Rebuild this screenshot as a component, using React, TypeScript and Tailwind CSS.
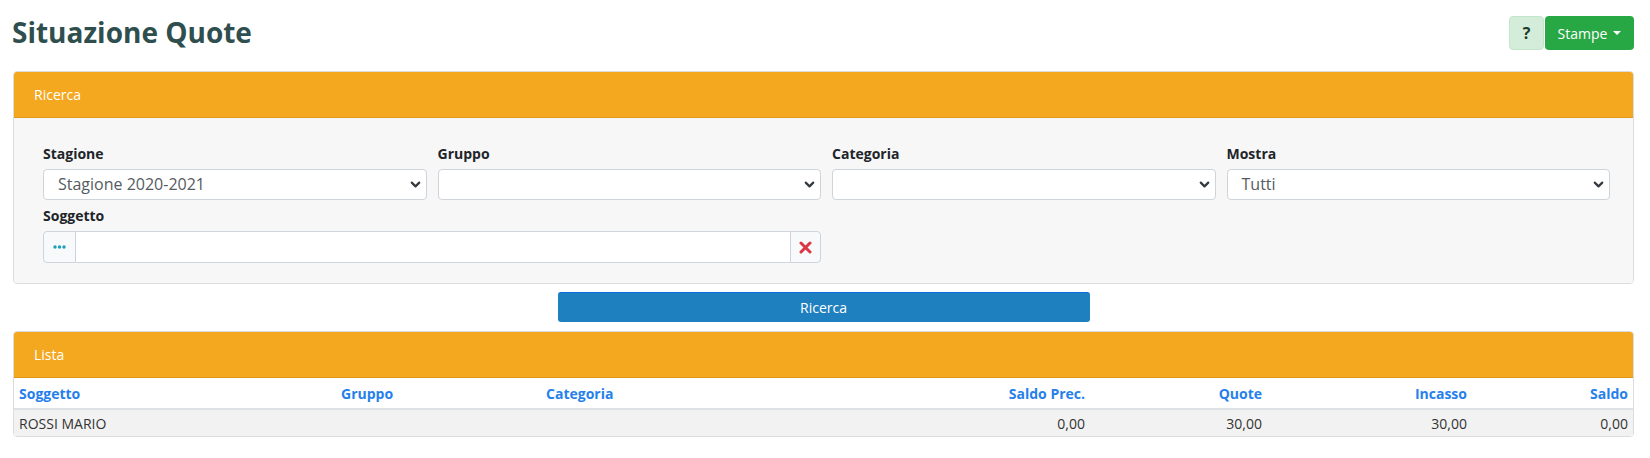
import { ChevronDown } from "lucide-react";

const font = { fontFamily: '"Open Sans", "Noto Sans", sans-serif' };

function Select({ value }: { value?: string }) {
  return (
    <div className="relative">
      <div className="h-[31px] rounded-[4px] border border-[#ced4da] bg-white pl-[14px] text-[16px] leading-[29px] text-[#555b61]">
        {value ?? "\u00a0"}
      </div>
      <ChevronDown
        className="pointer-events-none absolute right-[4px] top-[8px] h-[15px] w-[15px] text-[#343a40]"
        strokeWidth={3.5}
      />
    </div>
  );
}

function Campo({ label, value }: { label: string; value?: string }) {
  return (
    <div className="flex flex-col gap-[5px]">
      <label className="text-[14px] font-bold leading-[21px] text-[#212529]">{label}</label>
      <Select value={value} />
    </div>
  );
}

function Pannello({ titolo, children }: { titolo: string; children: React.ReactNode }) {
  return (
    <div className="overflow-hidden rounded-[4px] border border-[#dcdcdc]">
      <div className="flex h-[46px] items-center border-b border-[#e19a17] bg-[#f4a820] pl-[20px] text-[14px] text-white">
        {titolo}
      </div>
      {children}
    </div>
  );
}

const colonne = "grid grid-cols-[322px_205px_205px_344px_177px_205px_1fr]";

export default function App() {
  return (
    <div className="min-h-[458px] bg-white px-[13px] pr-[16px] text-[#212529]" style={font}>
      {/* intestazione */}
      <div className="flex items-start justify-between pt-[16px]">
        <h1 className="-ml-[1px] mt-[-1px] text-[28px] font-bold leading-[34px] text-[#2f4f4f]">
          Situazione Quote
        </h1>
        <div className="flex gap-[1px]">
          <button className="h-[34px] w-[35px] rounded-[4px] border border-[#c3e6cb] bg-[#d4edda] text-[16px] font-bold text-[#1d3a2a]">
            ?
          </button>
          <button className="flex h-[34px] w-[89px] items-center justify-center rounded-[4px] bg-[#28a745] text-[14px] text-white">
            Stampe
            <span className="ml-[6px] inline-block border-x-[4px] border-t-[4px] border-x-transparent border-t-white" />
          </button>
        </div>
      </div>

      {/* ricerca */}
      <div className="mt-[21px]">
        <Pannello titolo="Ricerca">
          <div className="bg-[#f7f7f7] pb-[20px] pl-[29px] pr-[23px] pt-[25px]">
            <div className="grid grid-cols-4 gap-x-[11px] gap-y-[5px]">
              <Campo label="Stagione" value="Stagione 2020-2021" />
              <Campo label="Gruppo" />
              <Campo label="Categoria" />
              <Campo label="Mostra" value="Tutti" />
              <div className="col-span-2 flex flex-col gap-[5px]">
                <label className="text-[14px] font-bold leading-[21px] text-[#212529]">Soggetto</label>
                <div className="flex h-[32px]">
                  <button className="flex w-[33px] items-center justify-center rounded-l-[4px] border border-[#ced4da] bg-[#f8f9fa]">
                    <svg width="13" height="4" viewBox="0 0 13 4">
                      <circle cx="2" cy="2" r="1.7" fill="#17a2b8" />
                      <circle cx="6.5" cy="2" r="1.7" fill="#17a2b8" />
                      <circle cx="11" cy="2" r="1.7" fill="#17a2b8" />
                    </svg>
                  </button>
                  <input className="min-w-0 flex-1 border-y border-[#ced4da] bg-white outline-none" />
                  <button className="flex w-[31px] items-center justify-center rounded-r-[4px] border border-[#ced4da] bg-[#f8f9fa]">
                    <svg width="13" height="13" viewBox="0 0 13 13">
                      <path d="M2 2 L11 11 M11 2 L2 11" stroke="#dc3545" strokeWidth="3" strokeLinecap="round" />
                    </svg>
                  </button>
                </div>
              </div>
            </div>
          </div>
        </Pannello>
      </div>

      <div className="mt-[8px] flex justify-center">
        <button className="h-[30px] w-[532px] rounded-[3px] border-t border-[#0a6fd8] bg-[#1f80bf] text-[14px] text-white">
          Ricerca
        </button>
      </div>

      {/* lista */}
      <div className="mt-[9px]">
        <Pannello titolo="Lista">
          <div className="bg-white text-[14px]">
            <div className={`${colonne} h-[32px] items-center border-b-2 border-[#dee2e6] font-bold text-[#2680eb]`}>
              <div className="px-[5px]">Soggetto</div>
              <div className="px-[5px]">Gruppo</div>
              <div className="px-[5px]">Categoria</div>
              <div className="px-[5px] text-right">Saldo Prec.</div>
              <div className="px-[5px] text-right">Quote</div>
              <div className="px-[5px] text-right">Incasso</div>
              <div className="px-[5px] text-right">Saldo</div>
            </div>
            <div className={`${colonne} h-[26px] items-center bg-[#f2f2f2] text-[#333]`}>
              <div className="px-[5px]">ROSSI MARIO</div>
              <div className="px-[5px]" />
              <div className="px-[5px]" />
              <div className="px-[5px] text-right">0,00</div>
              <div className="px-[5px] text-right">30,00</div>
              <div className="px-[5px] text-right">30,00</div>
              <div className="px-[5px] text-right">0,00</div>
            </div>
          </div>
        </Pannello>
      </div>
    </div>
  );
}
